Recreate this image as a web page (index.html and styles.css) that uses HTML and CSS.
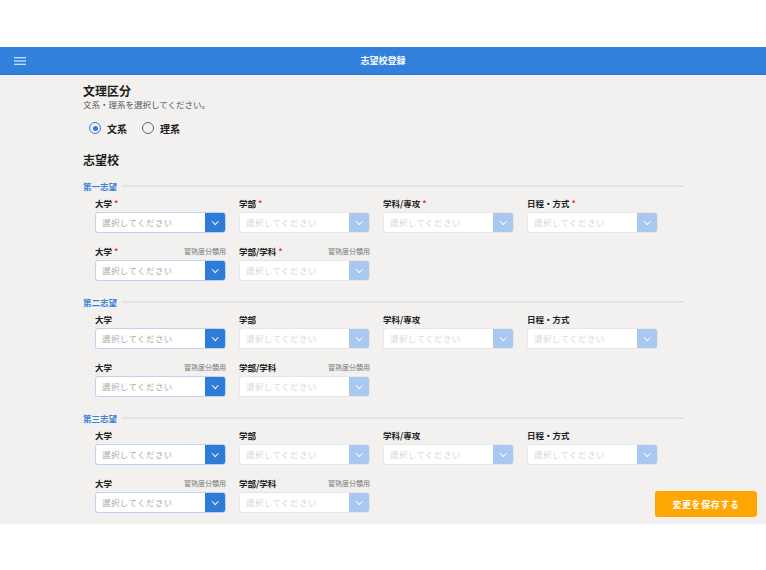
FILE: index.html
```html
<!DOCTYPE html>
<html lang="ja">
<head>
  <meta charset="UTF-8" />
  <title>志望校登録</title>
  <link rel="stylesheet" href="styles.css">
</head>
<body>
  <div class="top-space"></div>
  <header class="app-bar">
    <span class="menu-icon">
      <svg width="12" height="8" viewBox="0 0 12 8"><path d="M0 0.75H12M0 4H12M0 7.25H12" stroke="#fff" stroke-width="1.2"/></svg>
    </span>
    <h1>志望校登録</h1>
  </header>

  <main class="page">
    <div class="content">
      <h2>文理区分</h2>
      <p class="sub">文系・理系を選択してください。</p>
      <div class="radios">
        <label class="radio checked"><span class="dot"></span>文系</label>
        <label class="radio"><span class="dot"></span>理系</label>
      </div>

      <h2 class="schools-title">志望校</h2>

      <section class="group">
        <div class="group-title">第一志望</div>
        <div class="fields">
          <div class="field">
            <div class="label"><span>大学<em>*</em></span></div>
            <div class="select"><span>選択してください</span><b></b></div>
          </div>
          <div class="field">
            <div class="label"><span>学部<em>*</em></span></div>
            <div class="select off"><span>選択してください</span><b></b></div>
          </div>
          <div class="field">
            <div class="label"><span>学科/専攻<em>*</em></span></div>
            <div class="select off"><span>選択してください</span><b></b></div>
          </div>
          <div class="field">
            <div class="label"><span>日程・方式<em>*</em></span></div>
            <div class="select off"><span>選択してください</span><b></b></div>
          </div>
          <div class="field">
            <div class="label"><span>大学<em>*</em></span><small>習熟度分類用</small></div>
            <div class="select"><span>選択してください</span><b></b></div>
          </div>
          <div class="field">
            <div class="label"><span>学部/学科<em>*</em></span><small>習熟度分類用</small></div>
            <div class="select off"><span>選択してください</span><b></b></div>
          </div>
        </div>
      </section>

      <section class="group">
        <div class="group-title">第二志望</div>
        <div class="fields">
          <div class="field">
            <div class="label"><span>大学</span></div>
            <div class="select"><span>選択してください</span><b></b></div>
          </div>
          <div class="field">
            <div class="label"><span>学部</span></div>
            <div class="select off"><span>選択してください</span><b></b></div>
          </div>
          <div class="field">
            <div class="label"><span>学科/専攻</span></div>
            <div class="select off"><span>選択してください</span><b></b></div>
          </div>
          <div class="field">
            <div class="label"><span>日程・方式</span></div>
            <div class="select off"><span>選択してください</span><b></b></div>
          </div>
          <div class="field">
            <div class="label"><span>大学</span><small>習熟度分類用</small></div>
            <div class="select"><span>選択してください</span><b></b></div>
          </div>
          <div class="field">
            <div class="label"><span>学部/学科</span><small>習熟度分類用</small></div>
            <div class="select off"><span>選択してください</span><b></b></div>
          </div>
        </div>
      </section>

      <section class="group">
        <div class="group-title">第三志望</div>
        <div class="fields">
          <div class="field">
            <div class="label"><span>大学</span></div>
            <div class="select"><span>選択してください</span><b></b></div>
          </div>
          <div class="field">
            <div class="label"><span>学部</span></div>
            <div class="select off"><span>選択してください</span><b></b></div>
          </div>
          <div class="field">
            <div class="label"><span>学科/専攻</span></div>
            <div class="select off"><span>選択してください</span><b></b></div>
          </div>
          <div class="field">
            <div class="label"><span>日程・方式</span></div>
            <div class="select off"><span>選択してください</span><b></b></div>
          </div>
          <div class="field">
            <div class="label"><span>大学</span><small>習熟度分類用</small></div>
            <div class="select"><span>選択してください</span><b></b></div>
          </div>
          <div class="field">
            <div class="label"><span>学部/学科</span><small>習熟度分類用</small></div>
            <div class="select off"><span>選択してください</span><b></b></div>
          </div>
        </div>
      </section>
    </div>

    <button class="save-btn">変更を保存する</button>
  </main>
</body>
</html>
```

FILE: styles.css
```css
body {
  margin: 0;
  background: #fff;
  font-family: 'Noto Sans CJK JP', 'Noto Sans', sans-serif;
  color: #222;
}
.top-space {
  height: 47px;
}
.app-bar {
  height: 28px;
  background: #3180dc;
  display: flex;
  align-items: center;
  justify-content: center;
  position: relative;
  border-bottom: 1px solid #2c74c9;
  box-sizing: border-box;
}
.menu-icon {
  position: absolute;
  left: 14px;
  top: 10px;
  line-height: 0;
}
.app-bar h1 {
  margin: 0;
  font-size: 9px;
  font-weight: bold;
  color: #fff;
}
.page {
  position: relative;
  height: 449px;
  background: #f2f1ef;
  overflow: hidden;
}
.content {
  width: 600px;
  padding: 9px 0 0 83px;
}
h2 {
  margin: 0;
  font-size: 12px;
  line-height: 14px;
  font-weight: bold;
  color: #1d1d1d;
}
.sub {
  margin: 0;
  font-size: 8.5px;
  line-height: 12px;
  color: #555;
}
.radios {
  display: flex;
  gap: 15px;
  margin: 11px 0 0 6px;
  height: 14px;
  align-items: center;
}
.radio {
  display: flex;
  align-items: center;
  gap: 6px;
  font-size: 10px;
  font-weight: bold;
  color: #222;
}
.radio .dot {
  width: 12px;
  height: 12px;
  border: 1.4px solid #666;
  border-radius: 50%;
  box-sizing: border-box;
  display: flex;
  align-items: center;
  justify-content: center;
}
.radio.checked .dot {
  border-color: #2f7bd8;
}
.radio.checked .dot::after {
  content: "";
  width: 5px;
  height: 5px;
  border-radius: 50%;
  background: #2f7bd8;
}
.schools-title {
  margin-top: 18px;
}
.group {
  margin-top: 13px;
}
.group + .group {
  margin-top: 15px;
}
.group-title {
  display: flex;
  align-items: center;
  height: 12px;
  font-size: 8.5px;
  font-weight: bold;
  color: #3a82d8;
}
.group-title::after {
  content: "";
  flex: 1;
  height: 2px;
  background: #e4e3e1;
  margin-left: 5px;
}
.fields {
  display: grid;
  grid-template-columns: repeat(4, 131px);
  column-gap: 13px;
  row-gap: 12px;
  margin: 5px 0 0 12px;
}
.label {
  display: flex;
  justify-content: space-between;
  align-items: center;
  height: 12px;
  font-size: 8.5px;
  font-weight: bold;
  color: #222;
}
.label em {
  font-style: normal;
  color: #e0383e;
  margin-left: 2px;
}
.label small {
  font-size: 7px;
  font-weight: normal;
  color: #777;
}
.select {
  margin-top: 3px;
  height: 21px;
  display: flex;
  background: #fff;
  border: 1px solid #bcd4f1;
  border-radius: 3px;
  box-sizing: border-box;
  overflow: hidden;
}
.select span {
  flex: 1;
  padding-left: 6px;
  font-size: 8.5px;
  line-height: 19px;
  color: #a9a9a9;
  letter-spacing: 0.4px;
}
.select b {
  width: 20px;
  background: #2f7bd8;
  position: relative;
}
.select b::after {
  content: "";
  position: absolute;
  left: 7.5px;
  top: 6px;
  width: 3.5px;
  height: 3.5px;
  border-right: 1.5px solid #fff;
  border-bottom: 1.5px solid #fff;
  transform: rotate(45deg);
}
.select.off {
  border-color: #e6e6e6;
}
.select.off span {
  color: #d6d6d6;
}
.select.off b {
  background: #a9c8f0;
}
.save-btn {
  position: absolute;
  right: 9px;
  bottom: 7px;
  width: 102px;
  height: 26px;
  border: none;
  border-radius: 3px;
  background: #fea603;
  color: #fff;
  font-family: 'Noto Sans CJK JP', sans-serif;
  font-size: 9px;
  font-weight: bold;
  letter-spacing: 0.6px;
}
```
